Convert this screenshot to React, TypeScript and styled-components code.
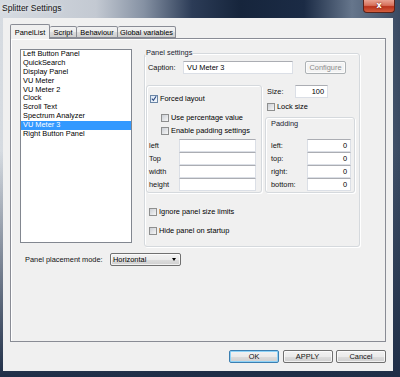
import React from "react"
import styled, { createGlobalStyle } from "styled-components"

const GlobalStyle = createGlobalStyle`
  html, body {
    margin: 0;
    padding: 0;
    background: #ffffff;
  }
  body {
    font-family: "Liberation Sans", Arial, sans-serif;
    font-size: 7.4px;
    color: #000;
  }
  * {
    box-sizing: border-box;
  }
`

const panels = [
  "Left Button Panel",
  "QuickSearch",
  "Display Panel",
  "VU Meter",
  "VU Meter 2",
  "Clock",
  "Scroll Text",
  "Spectrum Analyzer",
  "VU Meter 3",
  "Right Button Panel",
]

const tabs = [
  { label: "PanelList", width: 40 },
  { label: "Script", width: 27 },
  { label: "Behaviour", width: 41 },
  { label: "Global variables", width: 58 },
]

const Window = styled.div`
  width: 400px;
  height: 377px;
  display: flex;
  flex-direction: column;
  background: linear-gradient(180deg, rgba(30, 45, 70, 0) 40%, #1f2e47 100%),
    linear-gradient(
      90deg,
      #d6dbe1 0%,
      #c3c9d2 24%,
      #8591a3 36%,
      #2c3c57 48%,
      #16253c 60%,
      #1b2b45 76%,
      #66768c 88%,
      #3a4a62 100%
    );
`

const TitleBar = styled.div`
  height: 18px;
  display: flex;
  justify-content: space-between;
  align-items: flex-start;
  padding-left: 2px;
`

const Title = styled.div`
  font-size: 8.5px;
  margin-top: 3px;
  color: #111;
  text-shadow: 0 0 4px rgba(255, 255, 255, 0.9);
`

const CloseButton = styled.div`
  width: 32px;
  height: 13px;
  margin-right: 5px;
  border: 1px solid #5a2219;
  border-top: none;
  border-radius: 0 0 4px 4px;
  background: linear-gradient(180deg, #e9a393 0%, #d7705a 45%, #b9321b 55%, #d45f3f 100%);
  color: #fff;
  font-family: "DejaVu Sans", sans-serif;
  font-weight: bold;
  font-size: 8px;
  line-height: 11px;
  text-align: center;
  text-shadow: 0 0 2px #5a1a0e;
`

const Client = styled.div`
  flex: 1;
  margin: 0 7px 6px 3px;
  background: #f0f0f0;
  padding: 6px 7px 0 7px;
  display: flex;
  flex-direction: column;
`

const TabStrip = styled.div`
  height: 14px;
  display: flex;
  align-items: flex-end;
`

const Tab = styled.div<{ $active?: boolean; $width: number }>`
  width: ${(p) => p.$width}px;
  height: ${(p) => (p.$active ? 15 : 12)}px;
  margin-bottom: ${(p) => (p.$active ? -1 : 0)}px;
  position: relative;
  z-index: ${(p) => (p.$active ? 1 : 0)};
  border: 1px solid #898c95;
  border-bottom: ${(p) => (p.$active ? "none" : "1px solid #898c95")};
  border-left: ${(p) => (p.$active ? "1px solid #898c95" : "none")};
  border-radius: 2px 2px 0 0;
  background: ${(p) =>
    p.$active ? "#f0f0f0" : "linear-gradient(180deg, #f2f2f2 0%, #ebebeb 50%, #dddddd 51%, #cfcfcf 100%)"};
  display: flex;
  justify-content: center;
  align-items: ${(p) => (p.$active ? "flex-start" : "center")};
  padding-top: ${(p) => (p.$active ? 3 : 0)}px;
  white-space: nowrap;
`

const TabPanel = styled.div`
  height: 304px;
  border: 1px solid #898c95;
  box-shadow: inset 1px 1px 0 #ffffff;
  padding: 10px 0 0 9px;
  display: flex;
  flex-direction: column;
`

const TopRow = styled.div`
  display: flex;
  align-items: flex-start;
`

const ListBox = styled.div`
  width: 112px;
  height: 194px;
  border: 1px solid #828790;
  background: #ffffff;
`

const ListItem = styled.div<{ $selected?: boolean }>`
  height: 8.9px;
  line-height: 8.9px;
  padding-left: 2px;
  white-space: nowrap;
  background: ${(p) => (p.$selected ? "#3399ff" : "transparent")};
  color: ${(p) => (p.$selected ? "#ffffff" : "#000000")};
`

const GroupBox = styled.div`
  width: 216px;
  height: 194px;
  margin: 4px 0 0 12px;
  border: 1px solid #d5d9dd;
  border-radius: 3px;
  box-shadow: inset 1px 1px 0 #ffffff, 1px 1px 0 #ffffff;
  display: flex;
  flex-direction: column;
`

const Legend = styled.div`
  align-self: flex-start;
  height: 9px;
  line-height: 9px;
  margin: -6px 0 -3px 0;
  padding: 0 1px;
  background: #f0f0f0;
  color: #1b2432;
`

const CaptionRow = styled.div`
  display: flex;
  align-items: center;
  margin-top: 7px;
  padding-left: 3px;
  height: 13px;
`

const Label = styled.div<{ $width?: number }>`
  width: ${(p) => (p.$width ? `${p.$width}px` : "auto")};
  flex-shrink: 0;
  white-space: nowrap;
  color: #111;
`

const TextBox = styled.div<{ $width: number; $right?: boolean }>`
  width: ${(p) => p.$width}px;
  height: 13px;
  background: #ffffff;
  border: 1px solid #dbdfe6;
  border-top-color: #abadb3;
  line-height: 11px;
  padding: 0 3px;
  text-align: ${(p) => (p.$right ? "right" : "left")};
  white-space: nowrap;
  overflow: hidden;
`

const PushButton = styled.div<{ $width: number; $disabled?: boolean; $focused?: boolean }>`
  width: ${(p) => p.$width}px;
  height: 13px;
  border: 1px solid ${(p) => (p.$disabled ? "#adb2b5" : p.$focused ? "#3c7fb1" : "#707070")};
  border-radius: 2px;
  background: ${(p) =>
    p.$disabled
      ? "#f4f4f4"
      : "linear-gradient(180deg, #f2f2f2 0%, #ebebeb 50%, #dddddd 51%, #cfcfcf 100%)"};
  box-shadow: ${(p) => (p.$focused ? "inset 0 0 0 1px #8ed3f8" : "inset 0 0 0 1px rgba(255,255,255,0.7)")};
  color: ${(p) => (p.$disabled ? "#8a8a8a" : "#111")};
  display: flex;
  justify-content: center;
  align-items: center;
  flex-shrink: 0;
`

const ConfigureButton = styled(PushButton)`
  margin-left: 12px;
`

const MidRow = styled.div`
  display: flex;
  align-items: flex-start;
  margin: 11px 0 0 1px;
`

const Bevel = styled.div<{ $width: number; $height: number; $top?: number }>`
  width: ${(p) => p.$width}px;
  height: ${(p) => p.$height}px;
  margin-top: ${(p) => p.$top ?? 0}px;
  border: 1px solid #d5d9dd;
  border-radius: 3px;
  box-shadow: inset 1px 1px 0 #ffffff, 1px 1px 0 #ffffff;
  display: flex;
  flex-direction: column;
  flex-shrink: 0;
`

const CheckRow = styled.div<{ $indent: number; $top: number }>`
  display: flex;
  align-items: center;
  height: 9px;
  margin: ${(p) => p.$top}px 0 0 ${(p) => p.$indent}px;
  white-space: nowrap;
`

const CheckBox = styled.div<{ $checked?: boolean }>`
  width: 8px;
  height: 8px;
  margin-right: 2px;
  flex-shrink: 0;
  border: 1px solid ${(p) => (p.$checked ? "#6b86a6" : "#8e8f8f")};
  background: ${(p) =>
    p.$checked
      ? "linear-gradient(135deg, #dbe7f5 0%, #f4f8fc 100%)"
      : "linear-gradient(135deg, #cbcfd5 0%, #f6f6f6 100%)"};
  display: flex;
  justify-content: center;
  align-items: center;
`

const FieldList = styled.div<{ $top: number; $left: number }>`
  display: flex;
  flex-direction: column;
  margin: ${(p) => p.$top}px 0 0 ${(p) => p.$left}px;
`

const FieldRow = styled.div`
  display: flex;
  align-items: center;
  height: 13px;
`

const RightCol = styled.div`
  width: 90px;
  margin-left: 3px;
  display: flex;
  flex-direction: column;
`

const SizeRow = styled.div`
  display: flex;
  align-items: center;
  margin-left: 2px;
  height: 13px;
`

const PaddingTitle = styled.div`
  margin: 1px 0 0 5px;
  height: 9px;
  line-height: 9px;
  color: #1b2432;
`

const PlacementRow = styled.div`
  display: flex;
  align-items: center;
  margin: 6px 0 0 5px;
  height: 13px;
`

const Select = styled.div`
  width: 71px;
  height: 13px;
  border: 1px solid #707070;
  border-radius: 2px;
  background: linear-gradient(180deg, #f2f2f2 0%, #ebebeb 50%, #dddddd 51%, #cfcfcf 100%);
  box-shadow: inset 0 0 0 1px rgba(255, 255, 255, 0.7);
  display: flex;
  align-items: center;
  justify-content: space-between;
  padding: 0 4px 0 2px;
`

const Arrow = styled.span`
  width: 0;
  height: 0;
  border-left: 2.5px solid transparent;
  border-right: 2.5px solid transparent;
  border-top: 3px solid #000;
`

const Spacer = styled.div`
  flex: 1;
`

const ButtonRow = styled.div`
  display: flex;
  justify-content: flex-end;
  gap: 3.5px;
  margin-top: 8px;
`

const Tick = () => (
  <svg width="7" height="7" viewBox="0 0 7 7">
    <path d="M1 3.6 L2.8 5.6 L6 0.8" fill="none" stroke="#2c4a80" strokeWidth="1.3" />
  </svg>
)

const Check = ({ label, checked, indent, top }: { label: string; checked?: boolean; indent: number; top: number }) => (
  <CheckRow $indent={indent} $top={top}>
    <CheckBox $checked={checked}>{checked && <Tick />}</CheckBox>
    {label}
  </CheckRow>
)

export default function App() {
  return (
    <>
      <GlobalStyle />
      <Window>
        <TitleBar>
          <Title>Splitter Settings</Title>
          <CloseButton>x</CloseButton>
        </TitleBar>
        <Client>
          <TabStrip>
            {tabs.map((t, i) => (
              <Tab key={t.label} $active={i === 0} $width={t.width}>
                {t.label}
              </Tab>
            ))}
          </TabStrip>
          <TabPanel>
            <TopRow>
              <ListBox>
                {panels.map((name) => (
                  <ListItem key={name} $selected={name === "VU Meter 3"}>
                    {name}
                  </ListItem>
                ))}
              </ListBox>
              <GroupBox>
                <Legend>Panel settings</Legend>
                <CaptionRow>
                  <Label $width={35}>Caption:</Label>
                  <TextBox $width={110}>VU Meter 3</TextBox>
                  <ConfigureButton $width={41} $disabled>
                    Configure
                  </ConfigureButton>
                </CaptionRow>
                <MidRow>
                  <Bevel $width={116} $height={108}>
                    <Check label="Forced layout" checked indent={3} top={8} />
                    <Check label="Use percentage value" indent={14} top={10} />
                    <Check label="Enable padding settings" indent={14} top={4} />
                    <FieldList $top={4} $left={2}>
                      {["left", "Top", "width", "height"].map((f) => (
                        <FieldRow key={f}>
                          <Label $width={30}>{f}</Label>
                          <TextBox $width={77} />
                        </FieldRow>
                      ))}
                    </FieldList>
                  </Bevel>
                  <RightCol>
                    <SizeRow>
                      <Label $width={28}>Size:</Label>
                      <TextBox $width={33} $right>
                        100
                      </TextBox>
                    </SizeRow>
                    <Check label="Lock size" indent={2} top={4} />
                    <Bevel $width={90} $height={76} $top={6}>
                      <PaddingTitle>Padding</PaddingTitle>
                      <FieldList $top={11} $left={5}>
                        {["left:", "top:", "right:", "bottom:"].map((f) => (
                          <FieldRow key={f}>
                            <Label $width={36}>{f}</Label>
                            <TextBox $width={44} $right>
                              0
                            </TextBox>
                          </FieldRow>
                        ))}
                      </FieldList>
                    </Bevel>
                  </RightCol>
                </MidRow>
                <Check label="Ignore panel size limits" indent={4} top={14} />
                <Check label="Hide panel on startup" indent={4} top={10} />
              </GroupBox>
            </TopRow>
            <PlacementRow>
              <Label $width={85}>Panel placement mode:</Label>
              <Select>
                Horizontal
                <Arrow />
              </Select>
            </PlacementRow>
            <Spacer />
          </TabPanel>
          <ButtonRow>
            <PushButton $width={50} $focused>
              OK
            </PushButton>
            <PushButton $width={50}>APPLY</PushButton>
            <PushButton $width={50}>Cancel</PushButton>
          </ButtonRow>
        </Client>
      </Window>
    </>
  )
}
